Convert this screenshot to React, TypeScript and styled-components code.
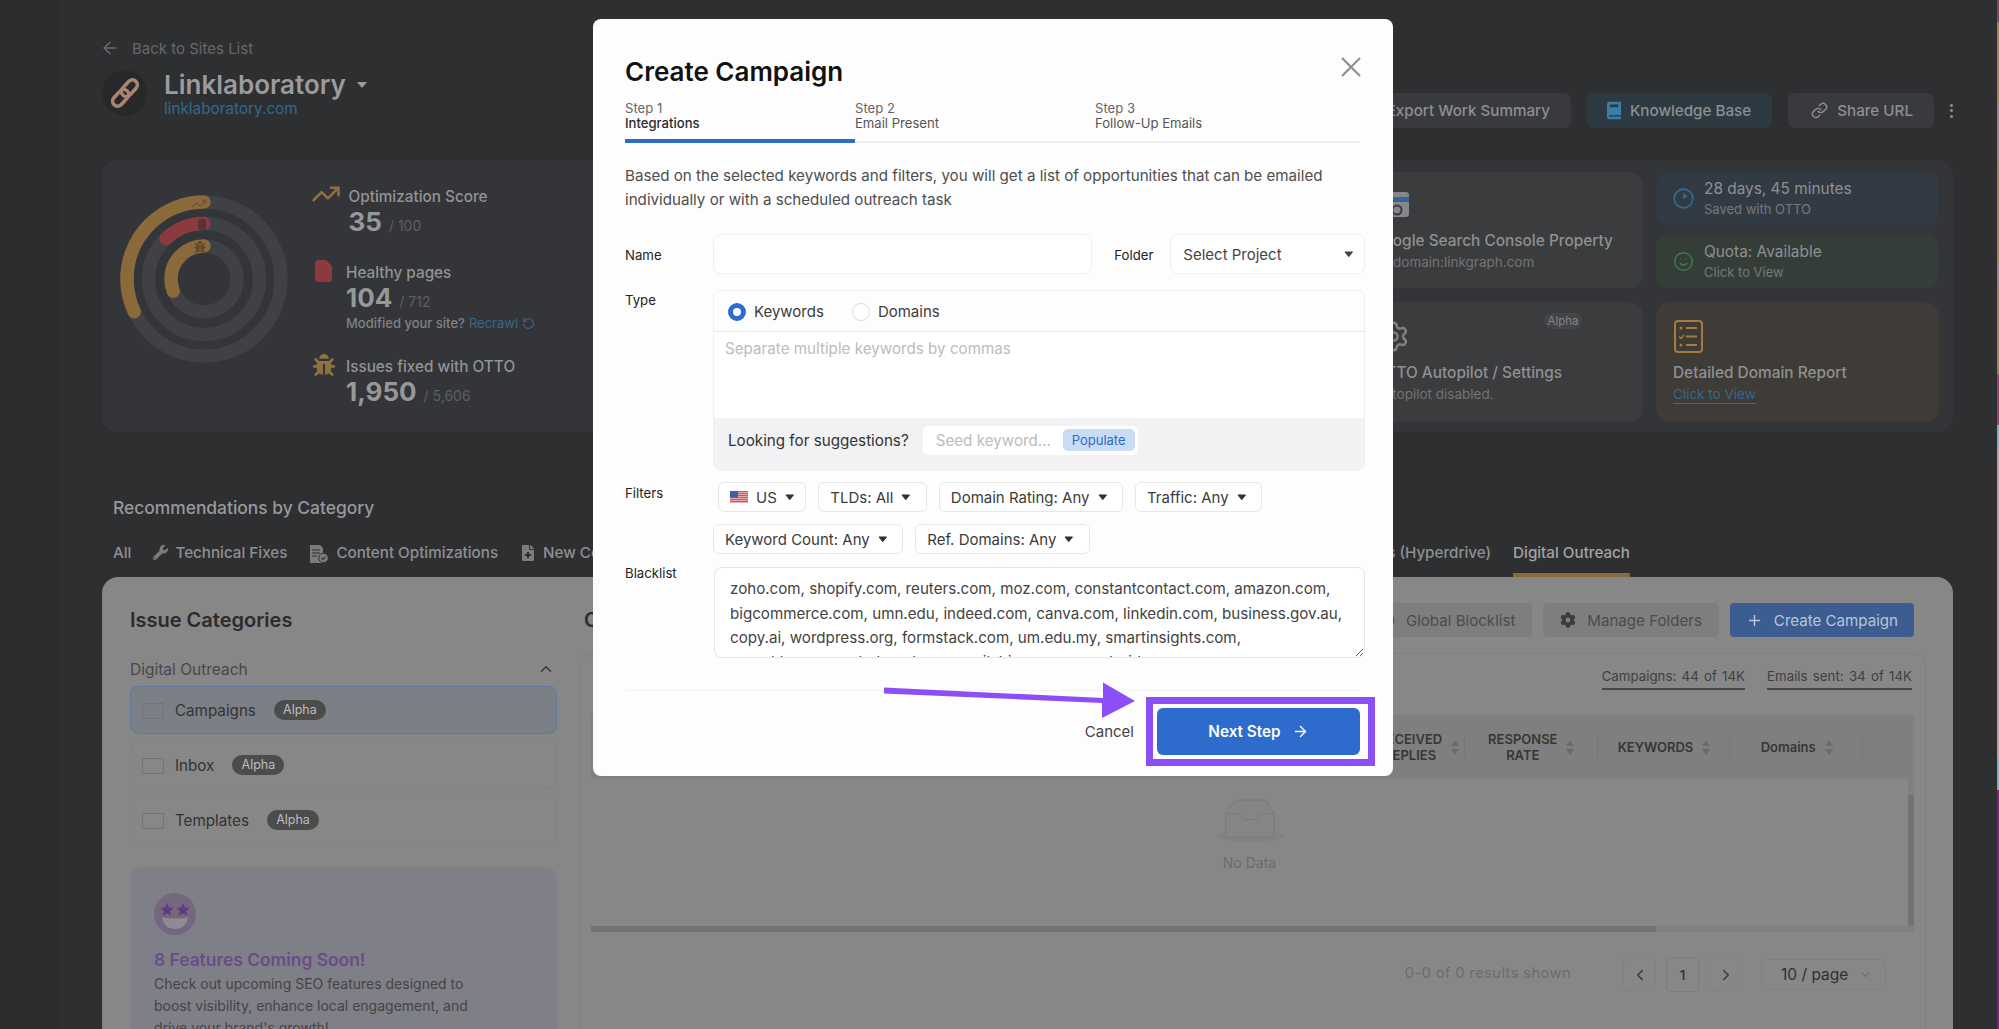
import React from "react";
import styled, { createGlobalStyle } from "styled-components";
import {
  ArrowLeft,
  ArrowRight,
  TrendingUp,
  RotateCcw,
  Smile,
  Settings,
  Link as LinkIcon,
  Plus,
  ChevronUp,
  ChevronDown,
  ChevronLeft,
  ChevronRight,
  Download,
  Ban,
} from "lucide-react";
import { FaBug, FaWrench, FaFileMedical, FaCog } from "react-icons/fa";

const Global = createGlobalStyle`
  html, body { margin: 0; padding: 0; height: 100%; overflow: hidden; background: #2e2f31; }
  body, input, textarea, button { font-family: Inter, "Noto Sans", "Liberation Sans", sans-serif; }
  * { box-sizing: border-box; }
`;

const Page = styled.div`
  position: relative;
  display: flex;
  width: 1999px;
  height: 1029px;
  overflow: hidden;
  background: #2e2f31;
`;
const Rail = styled.div`
  width: 59px;
  flex: none;
  background: #2c2d2f;
`;
const DesktopEdge = styled.div`
  width: 2px;
  flex: none;
  background: linear-gradient(
    to bottom,
    #7d4a6a 0 22px,
    #8f8a5e 22px 103px,
    #8a8a8a 103px 163px,
    #8f8a5e 163px 263px,
    #8a8a8a 263px 285px,
    #8f8a5e 285px 374px,
    #8a4a70 374px 425px,
    #6fb7c4 425px 449px,
    #a9a9a9 449px 758px,
    #6fb7c4 758px 790px,
    #7a1f8c 790px 1029px
  );
`;
const Main = styled.main`
  flex: 1;
  min-width: 0;
  display: flex;
  flex-direction: column;
  padding: 38px 44px 0 43px;
`;
const BackLink = styled.div`
  display: flex;
  align-items: center;
  gap: 12px;
  height: 20px;
  margin-left: -2px;
  font-size: 15px;
  color: #66686b;
`;
const Header = styled.header`
  display: flex;
  justify-content: space-between;
  height: 58px;
  margin-top: 12px;
`;
const Brand = styled.div`
  display: flex;
  gap: 17px;
  height: 46px;
`;
const BrandLogo = styled.div`
  width: 45px;
  height: 46px;
  border-radius: 50%;
  background: #27282a;
  display: flex;
  align-items: center;
  justify-content: center;
`;
const BrandText = styled.div`
  display: flex;
  flex-direction: column;
`;
const BrandName = styled.div`
  display: flex;
  align-items: center;
  gap: 11px;
  height: 28px;
  font-size: 26px;
  font-weight: 600;
  color: #9a9b9d;
`;
const BrandCaret = styled.span`
  width: 0;
  height: 0;
  margin-top: 2px;
  border-left: 5px solid transparent;
  border-right: 5px solid transparent;
  border-top: 6px solid #9a9b9d;
`;
const BrandUrl = styled.div`
  font-size: 15.3px;
  line-height: 22px;
  color: #2f6a92;
`;
const Actions = styled.div`
  display: flex;
  align-items: center;
  gap: 16px;
  align-self: flex-end;
`;
const ActionButton = styled.div<{ $tone?: "blue"; $left?: number }>`
  display: flex;
  align-items: center;
  gap: 9px;
  height: 35px;
  padding: 0 21px 0 ${(p) => p.$left ?? 21}px;
  border-radius: 7px;
  font-size: 15.2px;
  font-weight: 500;
  color: #8d8f91;
  background: ${(p) => (p.$tone === "blue" ? "#2e3a42" : "#393a3d")};
`;
const MoreDots = styled.div`
  display: flex;
  flex-direction: column;
  gap: 2.5px;
  width: 3px;
  span {
    width: 3px;
    height: 3px;
    border-radius: 50%;
    background: #8d8f91;
  }
`;

const StatsPanel = styled.section`
  display: flex;
  height: 272px;
  margin-top: 32px;
  padding: 12px 14px 10px 18px;
  border-radius: 16px;
  background: #333538;
`;
const RingBox = styled.div`
  flex: none;
  width: 168px;
  height: 168px;
  margin-top: 23px;
`;
const StatColumn = styled.div`
  display: flex;
  flex-direction: column;
  margin-left: 25px;
  padding-top: 15px;
`;
const StatRow = styled.div<{ $top?: number; $gap: number }>`
  display: flex;
  gap: ${(p) => p.$gap}px;
  margin-top: ${(p) => p.$top ?? 0}px;
`;
const StatIcon = styled.div<{ $width: number; $y: number; $x?: number }>`
  width: ${(p) => p.$width}px;
  margin-top: ${(p) => p.$y}px;
  margin-left: ${(p) => p.$x ?? 0}px;
  flex: none;
`;
const StatLabel = styled.div`
  font-size: 15.3px;
  line-height: 20px;
  font-weight: 500;
  color: #929395;
`;
const StatValue = styled.div`
  display: flex;
  align-items: baseline;
  gap: 7px;
  height: 30px;
  line-height: 30px;
  font-size: 26px;
  font-weight: 700;
  color: #97989a;
`;
const StatTotal = styled.span`
  font-size: 14px;
  font-weight: 400;
  color: #5d5f61;
`;
const StatNote = styled.div`
  display: flex;
  align-items: center;
  gap: 4px;
  margin-top: 1px;
  font-size: 13px;
  line-height: 18px;
  font-weight: 500;
  color: #808183;
  a {
    color: #35688c;
    font-weight: 400;
  }
`;

const CardGrid = styled.div`
  margin-left: auto;
  display: grid;
  grid-template-columns: 272px 283px;
  grid-template-rows: 116px 120px;
  column-gap: 13px;
  row-gap: 14px;
`;
const BigCard = styled.div<{ $tone?: "amber"; $pad?: number }>`
  position: relative;
  padding: 18px 14px 0 ${(p) => p.$pad ?? 1}px;
  border-radius: 14px;
  background: ${(p) => (p.$tone === "amber" ? "#3f3b36" : "#3a3c3e")};
`;
const CardIconSlot = styled.div<{ $x: number }>`
  margin-left: ${(p) => p.$x}px;
  height: 33px;
`;
const CardTitle = styled.div<{ $top: number }>`
  margin-top: ${(p) => p.$top}px;
  font-size: 15.4px;
  line-height: 20px;
  font-weight: 500;
  color: #8f9092;
`;
const CardSub = styled.div`
  margin-top: 1px;
  font-size: 13.5px;
  line-height: 20px;
  color: #737476;
`;
const CardLink = styled.a`
  display: inline-block;
  margin-top: -3px;
  font-size: 13.5px;
  line-height: 17px;
  color: #35688c;
  border-bottom: 1px solid #35688c;
`;
const AlphaChip = styled.span`
  position: absolute;
  top: 11px;
  right: 61px;
  width: 38px;
  height: 16px;
  border-radius: 8px;
  background: #434547;
  text-align: center;
  font-size: 11.5px;
  line-height: 16px;
  color: #838486;
`;
const SmallStack = styled.div`
  display: flex;
  flex-direction: column;
  gap: 10px;
`;
const SmallCard = styled.div<{ $tone: "blue" | "green" }>`
  flex: 1;
  display: flex;
  align-items: center;
  gap: 10px;
  padding-left: 17px;
  border-radius: 12px;
  background: ${(p) => (p.$tone === "blue" ? "#323b44" : "#353d38")};
`;
const SmallIcon = styled.div`
  flex: none;
  width: 21px;
  display: flex;
  justify-content: center;
`;
const SmallTitle = styled.div`
  font-size: 15.4px;
  line-height: 21px;
  color: #8f9092;
`;
const SmallSub = styled.div`
  font-size: 13px;
  line-height: 21px;
  color: #77787a;
`;

const SectionTitle = styled.h2`
  margin: 64px 0 0 11px;
  font-size: 17.4px;
  line-height: 24px;
  font-weight: 500;
  color: #98999b;
`;
const TabBar = styled.nav`
  display: flex;
  margin: 23px 0 0 11px;
  padding-right: 323px;
  height: 34px;
`;
const TabGroup = styled.div<{ $right?: boolean }>`
  display: flex;
  gap: 22px;
  margin-left: ${(p) => (p.$right ? "auto" : "0")};
`;
const Tab = styled.div<{ $active?: boolean }>`
  display: flex;
  align-items: flex-start;
  gap: 7px;
  height: 34px;
  font-size: 15.2px;
  line-height: 20px;
  font-weight: 500;
  white-space: nowrap;
  color: ${(p) => (p.$active ? "#a2a3a5" : "#8f9092")};
  border-bottom: 4px solid ${(p) => (p.$active ? "#8a6a3a" : "transparent")};
  svg {
    margin-top: 2px;
  }
`;

const Board = styled.section`
  flex: 1;
  display: flex;
  gap: 22px;
  min-height: 0;
  padding: 26px 27px 0 28px;
  border-radius: 16px 16px 0 0;
  background: #878787;
`;
const SideCol = styled.aside`
  flex: none;
  width: 427px;
`;
const SideTitle = styled.h3`
  margin: 4px 0 0;
  font-size: 20px;
  line-height: 26px;
  font-weight: 600;
  color: #2b2b2c;
`;
const SideGroup = styled.div`
  display: flex;
  align-items: center;
  justify-content: space-between;
  height: 20px;
  margin-top: 26px;
  padding-right: 2px;
  font-size: 15.5px;
  color: #474747;
`;
const IssueRow = styled.div<{ $active?: boolean }>`
  display: flex;
  align-items: center;
  height: 48px;
  margin-top: 7px;
  padding-left: 11px;
  border: 1px solid ${(p) => (p.$active ? "#5f789f" : "#828282")};
  border-radius: 8px;
  background: ${(p) => (p.$active ? "#7b7f86" : "transparent")};
  font-size: 15.2px;
  color: #333;
`;
const IssueCheck = styled.span`
  width: 22px;
  height: 16px;
  margin: 2px 11px 0 0;
  border: 1px solid #747474;
`;
const AlphaPill = styled.span`
  width: 52px;
  height: 20px;
  margin-left: 18px;
  border-radius: 10px;
  background: #4c4c4c;
  text-align: center;
  font-size: 12.5px;
  line-height: 20px;
  color: #bdbdbd;
`;
const Promo = styled.div`
  height: 200px;
  margin-top: 23px;
  padding: 26px 24px;
  border-radius: 12px;
  background: #7f7f87;
`;
const PromoTitle = styled.div`
  margin-top: 9px;
  font-size: 17.4px;
  line-height: 24px;
  font-weight: 600;
  color: #694d87;
`;
const PromoText = styled.div`
  margin-top: 1px;
  width: 340px;
  font-size: 14px;
  line-height: 22px;
  color: #444;
`;

const ContentCol = styled.div`
  flex: 1;
  min-width: 0;
`;
const ContentTop = styled.div`
  display: flex;
  align-items: center;
  gap: 11px;
  height: 34px;
  padding: 0 12px 0 5px;
`;
const ContentTitle = styled.h3`
  margin: 0 auto 0 0;
  font-size: 20px;
  font-weight: 600;
  color: #2b2b2c;
`;
const ToolButton = styled.div<{ $primary?: boolean }>`
  display: flex;
  align-items: center;
  gap: 11px;
  height: 34px;
  padding: 0 ${(p) => (p.$primary ? 16 : 17)}px;
  border-radius: ${(p) => (p.$primary ? 4 : 5)}px;
  font-size: 15.1px;
  color: ${(p) => (p.$primary ? "#b9c6d8" : "#4b4b4b")};
  background: ${(p) => (p.$primary ? "#3b5d92" : "#7e7e7e")};
`;
const ListPanel = styled.div`
  height: 420px;
  margin-top: 16px;
  padding: 12px 11px 0;
  border: 1px solid #818181;
  border-bottom: none;
  border-radius: 12px 12px 0 0;
`;
const QuotaRow = styled.div`
  display: flex;
  justify-content: flex-end;
  gap: 22px;
  padding-right: 2px;
`;
const Quota = styled.span`
  padding-bottom: 2px;
  border-bottom: 2px solid #474747;
  font-size: 13.3px;
  line-height: 20px;
  word-spacing: 1.5px;
  color: #3f3f3f;
`;
const TableWrap = styled.div`
  margin-top: 25px;
`;
const TableTop = styled.div`
  display: flex;
`;
const TableCols = styled.div`
  flex: 1;
  min-width: 0;
`;
const HeadRow = styled.div`
  display: flex;
  justify-content: flex-end;
  height: 64px;
  padding-right: 45px;
  background: #7f7f7f;
`;
const HeadCell = styled.div<{ $shift?: number }>`
  position: relative;
  display: flex;
  align-items: center;
  justify-content: center;
  gap: 9px;
  width: 132.7px;
  padding-left: ${(p) => p.$shift ?? 0}px;
  font-size: 13px;
  line-height: 16px;
  font-weight: 600;
  text-align: center;
  color: #363636;
  &::after {
    content: "";
    position: absolute;
    right: 0;
    top: 22px;
    height: 21px;
    width: 1px;
    background: #777;
  }
`;
const TableBody = styled.div`
  display: flex;
  flex-direction: column;
  align-items: center;
  height: 147px;
  padding-top: 20px;
`;
const EmptyText = styled.div`
  margin-top: 10px;
  font-size: 14px;
  line-height: 20px;
  color: #6c6c6c;
`;
const VTrack = styled.div`
  width: 6px;
  padding-top: 80px;
  background: #7f7f7f;
  &::before {
    content: "";
    display: block;
    height: 131px;
    background: #737373;
  }
`;
const HTrack = styled.div`
  height: 6px;
  background: #808080;
  &::before {
    content: "";
    display: block;
    height: 6px;
    width: 1065px;
    background: #737373;
  }
`;
const TableFoot = styled.div`
  display: flex;
  align-items: center;
  justify-content: flex-end;
  margin-top: 25px;
  padding-right: 28px;
`;
const ResultText = styled.span`
  margin-right: 52px;
  padding-bottom: 4px;
  font-size: 14.7px;
  letter-spacing: 0.4px;
  color: #6c6c6c;
`;
const PageButton = styled.div<{ $current?: boolean }>`
  display: flex;
  align-items: center;
  justify-content: center;
  width: 33px;
  height: 35px;
  margin-right: 10px;
  border: 1px solid ${(p) => (p.$current ? "#7c7c7c" : "#838383")};
  border-radius: 5px;
  font-size: 13.5px;
  font-weight: 500;
  color: #2e2e2e;
`;
const PageSize = styled.div`
  display: flex;
  align-items: center;
  justify-content: space-between;
  width: 125px;
  height: 31px;
  margin-left: 9px;
  padding: 0 12px 0 19px;
  border: 1px solid #818181;
  border-radius: 5px;
  font-size: 15.5px;
  color: #303030;
`;

const Modal = styled.div`
  position: absolute;
  left: 593px;
  top: 19px;
  width: 800px;
  height: 757px;
  padding: 36px 28px 0 32px;
  border-radius: 8px;
  background: #fdfdfd;
`;
const ModalTitle = styled.h1`
  margin: 0;
  font-size: 26px;
  line-height: 34px;
  font-weight: 600;
  color: #111;
`;
const CloseBox = styled.div`
  position: absolute;
  top: 38px;
  right: 32px;
  width: 20px;
  height: 20px;
`;
const Steps = styled.div`
  display: flex;
  margin: 12px 5px 0 0;
`;
const Step = styled.div<{ $active?: boolean; $width?: number }>`
  ${(p) => (p.$width ? `width: ${p.$width}px;` : "flex: 1;")}
  padding-bottom: ${(p) => (p.$active ? 7.5 : 9.5)}px;
  border-bottom: ${(p) => (p.$active ? "4px solid #2d6bcc" : "2px solid #eeeeee")};
  font-size: 13.1px;
  line-height: 15px;
  font-weight: ${(p) => (p.$active ? 500 : 400)};
  color: ${(p) => (p.$active ? "#2b2b2b" : "#555")};
`;
const StepNo = styled.div`
  font-weight: 400;
  color: #666;
`;
const Description = styled.p`
  margin: 21.5px 0 0;
  font-size: 15.15px;
  line-height: 24.4px;
  color: #4e4e4e;
`;
const FormRow = styled.div<{ $top: number }>`
  display: flex;
  align-items: flex-start;
  margin-top: ${(p) => p.$top}px;
`;
const FieldLabel = styled.label<{ $width?: number; $pad?: number }>`
  flex: none;
  width: ${(p) => p.$width ?? 88}px;
  margin-top: ${(p) => p.$pad ?? 0}px;
  font-size: 13.2px;
  line-height: 20px;
  font-weight: 400;
  color: #222;
`;
const NameInput = styled.input`
  width: 380px;
  height: 40px;
  margin-right: 22px;
  border: 1px solid #efefef;
  border-radius: 8px;
  background: #fff;
  outline: none;
`;
const FolderSelect = styled.div`
  display: flex;
  align-items: center;
  justify-content: space-between;
  width: 195px;
  height: 40px;
  padding: 0 11px 0 12px;
  border: 1px solid #efefef;
  border-radius: 8px;
  background: #fff;
  font-size: 15px;
  color: #444;
`;
const TypeBox = styled.div`
  width: 653px;
  height: 181px;
  border: 1px solid #f0f0f0;
  border-radius: 8px;
  overflow: hidden;
  display: flex;
  flex-direction: column;
`;
const TypeHead = styled.div`
  display: flex;
  align-items: center;
  height: 41px;
  padding: 1px 0 0 14px;
  border-bottom: 1px solid #e8e8e8;
`;
const Radio = styled.span<{ $on?: boolean }>`
  width: 18px;
  height: 18px;
  margin-right: 8px;
  border-radius: 50%;
  background: #fff;
  border: ${(p) => (p.$on ? "5px solid #2d6bcc" : "1px solid #dddddd")};
`;
const RadioLabel = styled.span<{ $gap?: number }>`
  margin-right: ${(p) => p.$gap ?? 0}px;
  font-size: 15px;
  color: #3c3c3c;
`;
const KeywordsArea = styled.textarea`
  flex: 1;
  display: block;
  width: 100%;
  padding: 7px 11px;
  border: none;
  outline: none;
  resize: none;
  background: #fff;
  font-size: 15.2px;
  line-height: 20px;
  &::placeholder {
    color: #bcbcbc;
  }
`;
const SuggestBar = styled.div`
  display: flex;
  align-items: center;
  height: 52px;
  padding: 0 0 8px 14px;
  background: #f2f2f4;
`;
const SuggestText = styled.span`
  margin-right: 14px;
  font-size: 15.2px;
  color: #333;
`;
const SeedBox = styled.div`
  display: flex;
  align-items: center;
  width: 215px;
  height: 29px;
  padding: 0 3px 0 11px;
  border-radius: 5px;
  background: #fff;
`;
const SeedInput = styled.input`
  flex: 1;
  min-width: 0;
  border: none;
  outline: none;
  background: transparent;
  font-size: 15.2px;
  &::placeholder {
    color: #bcbcbc;
  }
`;
const Populate = styled.span`
  width: 72px;
  height: 22px;
  border-radius: 5px;
  background: #c9dbf5;
  text-align: center;
  font-size: 13px;
  line-height: 22px;
  color: #2d6bcc;
`;
const FilterStack = styled.div`
  display: flex;
  flex-direction: column;
  gap: 12px;
`;
const FilterLine = styled.div<{ $indent?: number }>`
  display: flex;
  gap: 12px;
  margin-left: ${(p) => p.$indent ?? 0}px;
`;
const FilterChip = styled.div<{ $flag?: boolean }>`
  display: flex;
  align-items: center;
  gap: 8px;
  height: 30px;
  padding: 0 ${(p) => (p.$flag ? 11 : 15)}px 0 11px;
  border: 1px solid #e7e7e7;
  border-radius: 6px;
  background: #fff;
  font-size: 15px;
  color: #3c3c3c;
  white-space: nowrap;
`;
const BlacklistArea = styled.textarea`
  display: block;
  width: 653px;
  height: 91px;
  margin-left: 1px;
  padding: 9px 14px 0 15px;
  border: 1px solid #e5e5e5;
  border-radius: 8px;
  outline: none;
  resize: both;
  overflow: hidden;
  background: #fff;
  font-size: 15.15px;
  line-height: 24.2px;
  white-space: pre;
  color: #434343;
`;
const FootRule = styled.div`
  height: 1px;
  margin: 32px 5px 0 0;
  background: #f3f3f3;
`;
const ModalFoot = styled.div`
  display: flex;
  align-items: center;
  justify-content: flex-end;
  gap: 23px;
  margin: 17px 5px 0 0;
`;
const CancelText = styled.span`
  font-size: 15px;
  color: #444;
`;
const NextButton = styled.div`
  display: flex;
  align-items: center;
  justify-content: center;
  gap: 11px;
  width: 203px;
  height: 47px;
  border-radius: 6px;
  background: #2d6bcc;
  font-size: 15.3px;
  font-weight: 600;
  color: #fff;
`;
const Highlight = styled.div`
  position: absolute;
  left: 553px;
  top: 678px;
  width: 229px;
  height: 69px;
  border: 7px solid #8b4ff5;
`;
const PointerArrow = styled.svg`
  position: absolute;
  left: 290px;
  top: 660px;
`;

const Caret = ({ color = "#333", size = 9.5 }: { color?: string; size?: number }) => (
  <svg width={size} height={size * 0.7} viewBox="0 0 10 7">
    <path d="M1 1h8L5 6z" fill={color} stroke={color} strokeWidth="1" strokeLinejoin="round" />
  </svg>
);

const UsFlag = () => (
  <svg width="18" height="12" viewBox="0 0 18 12">
    <rect width="18" height="12" fill="#e8a9ad" />
    {[0, 2, 4, 6, 8, 10].map((y) => (
      <rect key={y} y={y} width="18" height="1" fill="#d9565c" />
    ))}
    <rect width="8" height="6.5" fill="#3f5f9e" />
  </svg>
);

const SortMark = () => (
  <svg width="8" height="15" viewBox="0 0 8 15">
    <path d="M4 0l4 6H0z" fill="#6b6b6b" />
    <path d="M4 15L0 9h8z" fill="#6b6b6b" />
  </svg>
);

const ChainLogo = () => (
  <svg width="28" height="30" viewBox="0 0 28 30">
    <g transform="rotate(42 14 15)" fill="none" stroke="#a98471" strokeWidth="3.6">
      <rect x="9" y="-1" width="10" height="19" rx="5" />
      <rect x="9" y="12" width="10" height="19" rx="5" />
    </g>
  </svg>
);

const RedDoc = () => (
  <svg width="17" height="22" viewBox="0 0 17 22">
    <path d="M3 0h8l6 6v13a3 3 0 0 1-3 3H3a3 3 0 0 1-3-3V3a3 3 0 0 1 3-3z" fill="#8b3b3e" />
  </svg>
);

const ClockIcon = () => (
  <svg width="21" height="21" viewBox="0 0 22 22" fill="none" stroke="#2f6d99" strokeWidth="1.7">
    <circle cx="11" cy="11" r="9.8" />
    <path d="M11 5.5v5.5l4-2z" fill="#2f6d99" strokeWidth="0.6" />
  </svg>
);

const ReportIcon = () => (
  <svg width="29" height="33" viewBox="0 0 29 33" fill="none" stroke="#a77b3e" strokeWidth="2">
    <rect x="1" y="1" width="27" height="31" rx="3" />
    <circle cx="7" cy="8" r="1.5" fill="#a77b3e" stroke="none" />
    <path d="M12 8h11M12 16.500h11M12 25h11" />
    <path d="M5 16.500l2 2 3-3.500" strokeWidth="1.500" />
    <circle cx="7" cy="25" r="1.500" fill="#a77b3e" stroke="none" />
  </svg>
);

const BookIcon = () => (
  <svg width="14" height="19" viewBox="0 0 15 19">
    <path d="M2.500 0H15v19H2.500A2.500 2.500 0 0 1 0 16.500v-14A2.500 2.500 0 0 1 2.500 0z" fill="#3b7ea9" />
    <rect x="3" y="3" width="9" height="3" fill="#2e3a42" />
    <rect x="2" y="14.500" width="13" height="1.500" fill="#2e3a42" />
  </svg>
);

const GscIcon = () => (
  <svg width="24" height="27" viewBox="0 0 24 27">
    <rect x="0" y="2" width="24" height="25" rx="3" fill="#85878a" />
    <rect x="0" y="7" width="24" height="5" fill="#33649a" />
    <circle cx="12" cy="20" r="4.500" fill="none" stroke="#3a3c3e" strokeWidth="2" />
  </svg>
);

const DocCheckIcon = () => (
  <svg width="20" height="18" viewBox="0 0 20 18">
    <path d="M1 0h10l3 3v15H1z" fill="#7b7c7e" />
    <path d="M3 5h8M3 8h8M3 11h5" stroke="#2e2f31" strokeWidth="1.200" />
    <circle cx="14.500" cy="13" r="4.800" fill="#7b7c7e" stroke="#2e2f31" />
    <path d="M12.500 13l1.500 1.500 2.500-2.800" fill="none" stroke="#2e2f31" strokeWidth="1.200" />
  </svg>
);

const StarFace = () => (
  <svg width="42" height="42" viewBox="0 0 42 42">
    <circle cx="21" cy="21" r="21" fill="#75677f" />
    <path d="M13 8l2 4.400 4.600.5-3.400 3.100 1 4.700-4.200-2.400-4.200 2.400 1-4.700-3.400-3.100 4.600-.5z" fill="#5a3f7a" transform="translate(0 2)" />
    <path d="M29 8l2 4.400 4.600.5-3.400 3.100 1 4.700-4.200-2.400-4.200 2.400 1-4.700-3.400-3.100 4.600-.5z" fill="#5a3f7a" transform="translate(0 2)" />
    <path d="M8 24c5 2 21 2 26 0-1 8-6 12-13 12S9 32 8 24z" fill="#8f8a93" />
  </svg>
);

const EmptyBox = () => (
  <svg width="68" height="44" viewBox="0 0 68 44" fill="none">
    <ellipse cx="34" cy="37" rx="34" ry="6" fill="#828282" />
    <path d="M9.500 14.500L19 1h30l9.500 13.500V36a2 2 0 0 1-2 2H11.500a2 2 0 0 1-2-2z" stroke="#7a7a7a" strokeWidth="1" fill="#858585" />
    <path d="M9.500 14.500h13.500c1.500 0 2 1 2.300 3 .3 2 1 3 3 3h11.400c2 0 2.700-1 3-3 .3-2 .8-3 2.300-3h13.500" stroke="#7a7a7a" strokeWidth="1" />
  </svg>
);

const Ring = ({ r, dash, color }: { r: number; dash: number; color: string }) => (
  <>
    <circle cx="84" cy="84" r={r} fill="none" stroke="#3f4144" strokeWidth="13.500" />
    <circle
      cx="84"
      cy="84"
      r={r}
      fill="none"
      stroke={color}
      strokeWidth="13.500"
      strokeLinecap="round"
      pathLength={100}
      strokeDasharray={`${dash} 100`}
      transform="translate(168 0) scale(-1 1) rotate(-90 84 84)"
    />
  </>
);

const RingChart = () => (
  <svg width="168" height="168" viewBox="0 0 168 168">
    <Ring r={77} dash={32} color="#8a6a3a" />
    <Ring r={55.5} dash={12} color="#8b3b3e" />
    <Ring r={33} dash={31} color="#8a6a3a" />
    <path d="M72 12l5-4 3 3 6-5M82 5.500h4v3.500" fill="none" stroke="#6b5533" strokeWidth="1.300" />
    <rect x="78" y="24" width="8" height="11" rx="2" fill="#5c3034" />
    <FaBug x="74" y="46" size={12} color="#5e4a2a" />
  </svg>
);

const tabsLeft = [
  { label: "Technical Fixes", icon: <FaWrench size={15} color="#7b7c7e" /> },
  { label: "Content Optimizations", icon: <DocCheckIcon /> },
  { label: "New Content", icon: <FaFileMedical size={16} color="#7b7c7e" /> },
];

export default function App() {
  return (
    <Page>
      <Global />
      <Rail />
      <Main>
        <BackLink>
          <ArrowLeft size={20} color="#6b6d70" strokeWidth={1.7} />
          Back to Sites List
        </BackLink>
        <Header>
          <Brand>
            <BrandLogo>
              <ChainLogo />
            </BrandLogo>
            <BrandText>
              <BrandName>
                Linklaboratory
                <BrandCaret />
              </BrandName>
              <BrandUrl>linklaboratory.com</BrandUrl>
            </BrandText>
          </Brand>
          <Actions>
            <ActionButton>
              <Download size={16} />
              Export Work Summary
            </ActionButton>
            <ActionButton $tone="blue" $left={20}>
              <BookIcon />
              Knowledge Base
            </ActionButton>
            <ActionButton $left={23}>
              <LinkIcon size={17} />
              Share URL
            </ActionButton>
            <MoreDots>
              <span />
              <span />
              <span />
            </MoreDots>
          </Actions>
        </Header>

        <StatsPanel>
          <RingBox>
            <RingChart />
          </RingBox>
          <StatColumn>
            <StatRow $gap={13}>
              <StatIcon $width={25} $y={-8} $x={-2.5}>
                <TrendingUp size={30} color="#8f7040" strokeWidth={2} />
              </StatIcon>
              <div>
                <StatLabel>Optimization Score</StatLabel>
                <StatValue>
                  35 <StatTotal>/ 100</StatTotal>
                </StatValue>
              </div>
            </StatRow>
            <StatRow $gap={14} $top={26}>
              <StatIcon $width={17} $y={-3} $x={2}>
                <RedDoc />
              </StatIcon>
              <div>
                <StatLabel>Healthy pages</StatLabel>
                <StatValue>
                  104 <StatTotal>/ 712</StatTotal>
                </StatValue>
                <StatNote>
                  Modified your site? <a>Recrawl</a>
                  <RotateCcw size={13} color="#35688c" />
                </StatNote>
              </div>
            </StatRow>
            <StatRow $gap={12} $top={25}>
              <StatIcon $width={21} $y={-3}>
                <FaBug size={22} color="#8f7040" />
              </StatIcon>
              <div>
                <StatLabel>Issues fixed with OTTO</StatLabel>
                <StatValue>
                  1,950 <StatTotal>/ 5,606</StatTotal>
                </StatValue>
              </div>
            </StatRow>
          </StatColumn>
          <CardGrid>
            <BigCard>
              <CardIconSlot $x={13}>
                <GscIcon />
              </CardIconSlot>
              <CardTitle $top={8}>Google Search Console Property</CardTitle>
              <CardSub>sc-domain:linkgraph.com</CardSub>
            </BigCard>
            <SmallStack>
              <SmallCard $tone="blue">
                <SmallIcon>
                  <ClockIcon />
                </SmallIcon>
                <div>
                  <SmallTitle>28 days, 45 minutes</SmallTitle>
                  <SmallSub>Saved with OTTO</SmallSub>
                </div>
              </SmallCard>
              <SmallCard $tone="green">
                <SmallIcon>
                  <Smile size={25} color="#3f7a4e" strokeWidth={1.6} />
                </SmallIcon>
                <div>
                  <SmallTitle>Quota: Available</SmallTitle>
                  <SmallSub>Click to View</SmallSub>
                </div>
              </SmallCard>
            </SmallStack>
            <BigCard $pad={4}>
              <AlphaChip>Alpha</AlphaChip>
              <CardIconSlot $x={2}>
                <Settings size={33} color="#7f8082" strokeWidth={1.8} />
              </CardIconSlot>
              <CardTitle $top={10}>OTTO Autopilot / Settings</CardTitle>
              <CardSub>Autopilot disabled.</CardSub>
            </BigCard>
            <BigCard $tone="amber" $pad={17}>
              <CardIconSlot $x={1}>
                <ReportIcon />
              </CardIconSlot>
              <CardTitle $top={10}>Detailed Domain Report</CardTitle>
              <CardLink>Click to View</CardLink>
            </BigCard>
          </CardGrid>
        </StatsPanel>

        <SectionTitle>Recommendations by Category</SectionTitle>
        <TabBar>
          <TabGroup>
            <Tab>All</Tab>
            {tabsLeft.map((t) => (
              <Tab key={t.label}>
                {t.icon}
                {t.label}
              </Tab>
            ))}
          </TabGroup>
          <TabGroup $right>
            <Tab>Cloud Stacks (Hyperdrive)</Tab>
            <Tab $active>Digital Outreach</Tab>
          </TabGroup>
        </TabBar>

        <Board>
          <SideCol>
            <SideTitle>Issue Categories</SideTitle>
            <SideGroup>
              Digital Outreach
              <ChevronUp size={18} color="#3a3a3a" />
            </SideGroup>
            <IssueRow $active>
              <IssueCheck />
              Campaigns
              <AlphaPill>Alpha</AlphaPill>
            </IssueRow>
            <IssueRow>
              <IssueCheck />
              Inbox
              <AlphaPill>Alpha</AlphaPill>
            </IssueRow>
            <IssueRow>
              <IssueCheck />
              Templates
              <AlphaPill>Alpha</AlphaPill>
            </IssueRow>
            <Promo>
              <StarFace />
              <PromoTitle>8 Features Coming Soon!</PromoTitle>
              <PromoText>
                Check out upcoming SEO features designed to boost visibility, enhance local engagement, and drive your
                brand's growth!
              </PromoText>
            </Promo>
          </SideCol>
          <ContentCol>
            <ContentTop>
              <ContentTitle>Campaigns</ContentTitle>
              <ToolButton>
                <Ban size={15} />
                Global Blocklist
              </ToolButton>
              <ToolButton>
                <FaCog size={16} color="#3b3b3b" />
                Manage Folders
              </ToolButton>
              <ToolButton $primary>
                <Plus size={17} />
                Create Campaign
              </ToolButton>
            </ContentTop>
            <ListPanel>
              <QuotaRow>
                <Quota>Campaigns: 44 of 14K</Quota>
                <Quota>Emails sent: 34 of 14K</Quota>
              </QuotaRow>
              <TableWrap>
                <TableTop>
                  <TableCols>
                    <HeadRow>
                      <HeadCell $shift={40}>
                        RECEIVED
                        <br />
                        REPLIES
                        <SortMark />
                      </HeadCell>
                      <HeadCell>
                        RESPONSE
                        <br />
                        RATE
                        <SortMark />
                      </HeadCell>
                      <HeadCell>
                        KEYWORDS
                        <SortMark />
                      </HeadCell>
                      <HeadCell>
                        Domains
                        <SortMark />
                      </HeadCell>
                    </HeadRow>
                    <TableBody>
                      <EmptyBox />
                      <EmptyText>No Data</EmptyText>
                    </TableBody>
                  </TableCols>
                  <VTrack />
                </TableTop>
                <HTrack />
              </TableWrap>
              <TableFoot>
                <ResultText>0-0 of 0 results shown</ResultText>
                <PageButton>
                  <ChevronLeft size={18} color="#3a3a3a" />
                </PageButton>
                <PageButton $current>1</PageButton>
                <PageButton>
                  <ChevronRight size={18} color="#3a3a3a" />
                </PageButton>
                <PageSize>
                  10 / page
                  <ChevronDown size={15} color="#6f6f6f" />
                </PageSize>
              </TableFoot>
            </ListPanel>
          </ContentCol>
        </Board>
      </Main>
      <DesktopEdge />

      <Modal>
        <ModalTitle>Create Campaign</ModalTitle>
        <CloseBox>
          <svg width="20" height="20" viewBox="0 0 20 20">
            <path d="M1 1l18 18M19 1L1 19" stroke="#8c8c8c" strokeWidth="2" />
          </svg>
        </CloseBox>
        <Steps>
          <Step $active $width={230}>
            <StepNo>Step 1</StepNo>
            Integrations
          </Step>
          <Step $width={240}>
            <StepNo>Step 2</StepNo>
            Email Present
          </Step>
          <Step>
            <StepNo>Step 3</StepNo>
            Follow-Up Emails
          </Step>
        </Steps>
        <Description>
          Based on the selected keywords and filters, you will get a list of opportunities that can be emailed
          <br />
          individually or with a scheduled outreach task
        </Description>

        <FormRow $top={21.5}>
          <FieldLabel $pad={11}>Name</FieldLabel>
          <NameInput />
          <FieldLabel $width={56} $pad={11}>
            Folder
          </FieldLabel>
          <FolderSelect>
            Select Project
            <Caret color="#444" />
          </FolderSelect>
        </FormRow>

        <FormRow $top={16}>
          <FieldLabel>Type</FieldLabel>
          <TypeBox>
            <TypeHead>
              <Radio $on />
              <RadioLabel $gap={28}>Keywords</RadioLabel>
              <Radio />
              <RadioLabel>Domains</RadioLabel>
            </TypeHead>
            <KeywordsArea placeholder="Separate multiple keywords by commas" />
            <SuggestBar>
              <SuggestText>Looking for suggestions?</SuggestText>
              <SeedBox>
                <SeedInput placeholder="Seed keyword..." />
                <Populate>Populate</Populate>
              </SeedBox>
            </SuggestBar>
          </TypeBox>
        </FormRow>

        <FormRow $top={11}>
          <FieldLabel $pad={1}>Filters</FieldLabel>
          <FilterStack>
            <FilterLine $indent={5}>
              <FilterChip $flag>
                <UsFlag />
                US
                <Caret />
              </FilterChip>
              <FilterChip>
                TLDs: All
                <Caret />
              </FilterChip>
              <FilterChip>
                Domain Rating: Any
                <Caret />
              </FilterChip>
              <FilterChip>
                Traffic: Any
                <Caret />
              </FilterChip>
            </FilterLine>
            <FilterLine>
              <FilterChip>
                Keyword Count: Any
                <Caret />
              </FilterChip>
              <FilterChip>
                Ref. Domains: Any
                <Caret />
              </FilterChip>
            </FilterLine>
          </FilterStack>
        </FormRow>

        <FormRow $top={13}>
          <FieldLabel $pad={-4}>Blacklist</FieldLabel>
          <BlacklistArea
            readOnly
            value={
              "zoho.com, shopify.com, reuters.com, moz.com, constantcontact.com, amazon.com,\nbigcommerce.com, umn.edu, indeed.com, canva.com, linkedin.com, business.gov.au,\ncopy.ai, wordpress.org, formstack.com, um.edu.my, smartinsights.com,\ncrunchbase.com, hubspot.com, mailchimp.com, sendgrid.com"
            }
          />
        </FormRow>

        <FootRule />
        <ModalFoot>
          <CancelText>Cancel</CancelText>
          <NextButton>
            Next Step
            <ArrowRight size={17} />
          </NextButton>
        </ModalFoot>

        <Highlight />
        <PointerArrow width="260" height="60" viewBox="0 0 260 60">
          <path d="M1 8.500L220 19l0-15.500L252 22l-33 17 0-15L1 14.500z" fill="#8b4ff5" />
        </PointerArrow>
      </Modal>
    </Page>
  );
}
